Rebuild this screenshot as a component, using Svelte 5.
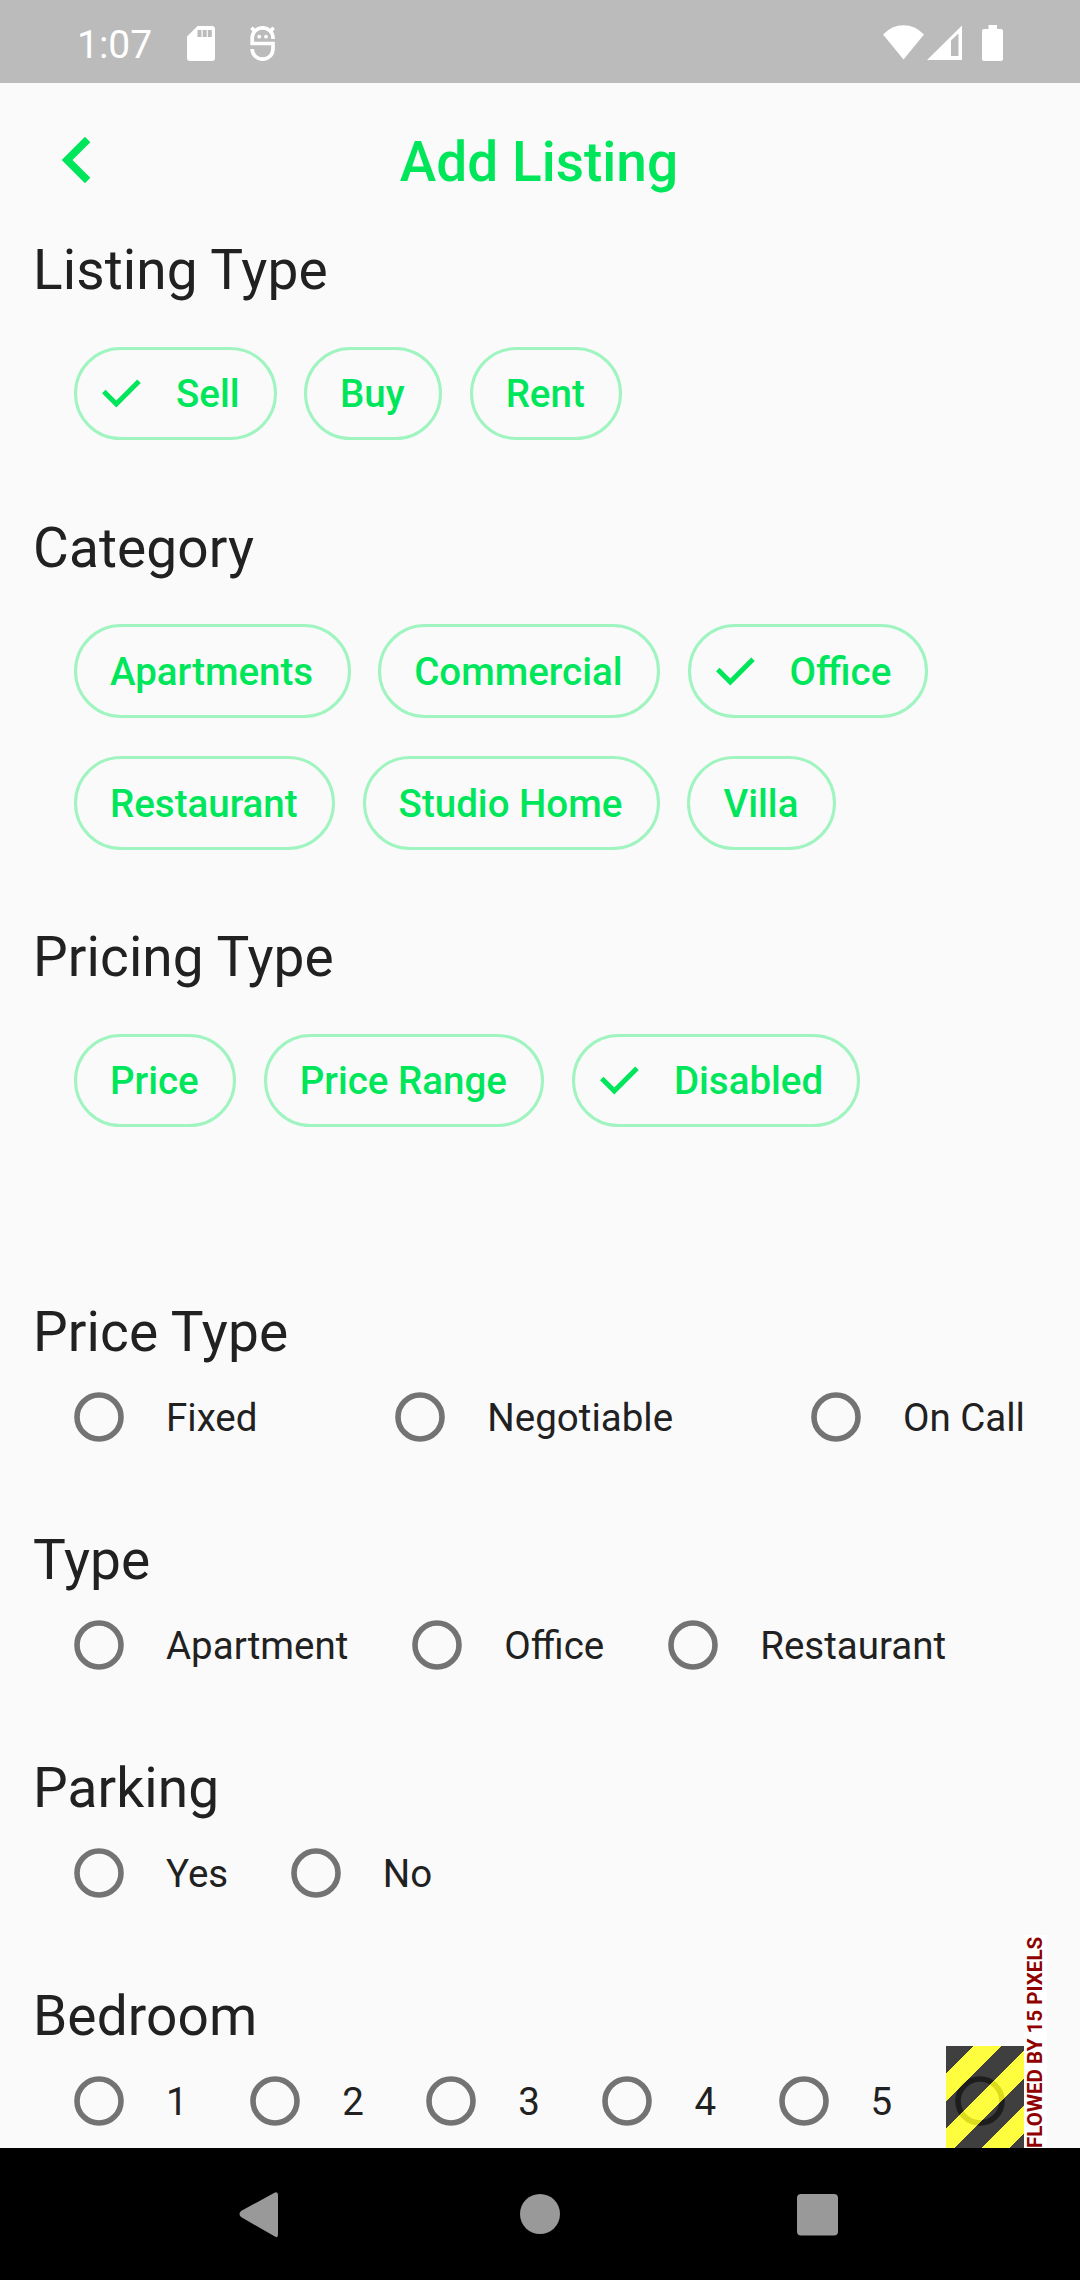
<script>
  const chipGroups = [
    { title: 'Listing Type', rows: [['Sell', 'Buy', 'Rent']], selected: 'Sell' },
    {
      title: 'Category',
      rows: [['Apartments', 'Commercial', 'Office'], ['Restaurant', 'Studio Home', 'Villa']],
      selected: 'Office'
    },
    { title: 'Pricing Type', rows: [['Price', 'Price Range', 'Disabled']], selected: 'Disabled' }
  ];
  const radioGroups = [
    { title: 'Price Type', options: ['Fixed', 'Negotiable', 'On Call'], spread: true },
    { title: 'Type', options: ['Apartment', 'Office', 'Restaurant'], roomy: true },
    { title: 'Parking', options: ['Yes', 'No'] },
    { title: 'Bedroom', options: ['1', '2', '3', '4', '5', ''], overflow: true }
  ];
</script>

<div class="screen">
  <header class="status">
    <span class="time">1:07</span>
    <svg class="sd" width="28" height="35" viewBox="0 0 28 35">
      <path fill="#fff" fill-rule="evenodd" d="M10.500 0H25a3 3 0 0 1 3 3v29a3 3 0 0 1-3 3H3a3 3 0 0 1-3-3V10.500zM10.500 4v7h4V4zM15.700 4v7h4V4zM20.800 4v7h4V4z" />
    </svg>
    <svg class="mask" width="26" height="35" viewBox="0 0 26 35">
      <g fill="none" stroke="#fff" stroke-width="3.700">
        <path d="M23 13V12A10.400 10.200 0 0 0 2.200 12V17.500H23V23A10.400 10.200 0 0 1 2.200 23" />
        <path d="M1.500 1.700l4 4M23.700 1.700l-4 4" />
      </g>
      <circle cx="9.200" cy="10.700" r="1.900" fill="#fff" />
      <circle cx="16" cy="10.700" r="1.900" fill="#fff" />
    </svg>
    <svg class="system" width="122" height="37" viewBox="0 0 122 37">
      <g fill="#fff">
        <path d="M0 9.500Q9 .3 20.500 .3T41 9.500L20.500 34.500z" />
        <path fill-rule="evenodd" d="M44 35L79 .5V35zM68 15.500V31H75.500V8.500z" />
        <path d="M105.500 0h8.500v4h4a2 2 0 0 1 2 2v28a2 2 0 0 1-2 2H101a2 2 0 0 1-2-2V6a2 2 0 0 1 2-2h4.500z" />
      </g>
    </svg>
  </header>

  <div class="appbar">
    <svg class="back" width="30" height="48" viewBox="0 0 30 48">
      <path fill="#00e65b" d="M24 .8L29.300 6.200 11.500 24 29.300 41.800 24 47.200 .7 24z" />
    </svg>
    <h1>Add Listing</h1>
  </div>

  <main>
    {#each chipGroups as group}
      <section class="chips-section">
        <h2>{group.title}</h2>
        {#each group.rows as row}
          <div class="chips">
            {#each row as label}
              <button class="chip" class:selected={label === group.selected}>
                {#if label === group.selected}
                  <svg width="39" height="29" viewBox="0 0 39 29">
                    <path fill="none" stroke="#00e65b" stroke-width="5" d="M1.800 12.600L14.300 25 37 2.300" />
                  </svg>
                {/if}
                <span>{label}</span>
              </button>
            {/each}
          </div>
        {/each}
      </section>
    {/each}

    <div class="radio-groups">
      {#each radioGroups as group}
        <section class="radio-section">
          <h2>{group.title}</h2>
          <div class="radios" class:spread={group.spread} class:roomy={group.roomy}>
            {#each group.options as option}
              <div class="option">
                <svg width="50" height="50" viewBox="0 0 50 50">
                  <circle cx="25" cy="25" r="22" fill="none" stroke="#737373" stroke-width="5.600" />
                </svg>
                <span>{option}</span>
              </div>
            {/each}
            {#if group.overflow}
              <div class="stripes"></div>
              <div class="warning">FLOWED BY 15 PIXELS</div>
            {/if}
          </div>
        </section>
      {/each}
    </div>
  </main>

  <nav>
    <svg width="1080" height="132" viewBox="0 0 1080 132">
      <g fill="#999">
        <path d="M241 63L274 45Q278 43 278 47V86Q278 91 274 88L241 69Q238 66 241 63z" />
        <circle cx="540" cy="66" r="20" />
        <rect x="797" y="46" width="41" height="41.500" rx="4" />
      </g>
    </svg>
  </nav>
</div>

<style>
  :global(body) {
    background: #fafafa;
  }
  .screen {
    width: 1080px;
    height: 2280px;
    overflow: hidden;
    display: flex;
    flex-direction: column;
    background: #fafafa;
    color: #212121;
    font-family: Roboto, sans-serif;
  }
  h1,
  h2 {
    margin: 0;
  }
  .status {
    flex: none;
    box-sizing: border-box;
    height: 83px;
    padding: 0 75px 0 77px;
    display: flex;
    align-items: center;
    background: #bbb;
    color: #fff;
  }
  .time {
    width: 110px;
    font-size: 39px;
    line-height: 48px;
    padding-top: 7px;
  }
  .sd,
  .mask {
    margin-top: 4px;
  }
  .mask {
    margin-left: 35px;
  }
  .system {
    margin-left: auto;
    margin-top: 4px;
  }
  .appbar {
    flex: none;
    height: 155px;
    display: grid;
    grid-template-columns: 200px 1fr 200px;
    align-items: center;
  }
  .back {
    margin-left: 61px;
    margin-bottom: 1px;
  }
  h1 {
    padding-top: 3px;
    padding-right: 2px;
    font-size: 55px;
    font-weight: 500;
    line-height: 64px;
    text-align: center;
    color: #00e65b;
  }
  main {
    flex: 1;
    min-height: 0;
    overflow: hidden;
  }
  h2 {
    padding-left: 33px;
    font-size: 55px;
    font-weight: 400;
    line-height: 64px;
    letter-spacing: 0.1px;
  }
  .chips-section {
    padding-bottom: 56px;
  }
  .chips-section h2 {
    padding-bottom: 25.500px;
  }
  .chips {
    height: 132px;
    padding-left: 74px;
    display: flex;
    align-items: center;
    gap: 27.500px;
  }
  .chip {
    box-sizing: border-box;
    height: 93.500px;
    padding: 1px 34.500px 0 33px;
    display: flex;
    align-items: center;
    border: 3px solid #a0f4c0;
    border-radius: 47px;
    background: none;
    color: #00e65b;
    font: 500 38.500px/46px Roboto, sans-serif;
  }
  .chip.selected {
    padding-left: 25px;
    padding-right: 34px;
  }
  .chip svg {
    margin-top: -1px;
    margin-right: 35px;
  }
  .radio-groups {
    padding-top: 97.500px;
  }
  .radio-section {
    height: 228px;
  }
  .radios {
    position: relative;
    height: 110px;
    margin: -2px 56px 0 33px;
    display: flex;
    align-items: center;
    gap: 21.500px;
  }
  .roomy {
    gap: 23px;
  }
  .spread {
    justify-content: space-between;
    margin-right: 55px;
  }
  .option {
    flex: none;
    display: flex;
    align-items: center;
    font-size: 38.500px;
    line-height: 46px;
  }
  .option span {
    padding-top: 2px;
  }
  .option svg {
    flex: none;
    margin: 0 42px 0 41px;
  }
  .stripes {
    position: absolute;
    right: 0;
    top: 0;
    width: 78.500px;
    height: 110px;
    background: repeating-linear-gradient(135deg, rgba(0, 0, 0, 0.75) 0 19.450px, rgba(255, 255, 0, 0.75) 19.450px 38.900px);
  }
  .warning {
    position: absolute;
    left: 991px;
    top: -111px;
    box-sizing: border-box;
    width: 23px;
    height: 213px;
    background: #fff;
    color: #900000;
    font-size: 20.600px;
    font-weight: 700;
    line-height: 23px;
    white-space: nowrap;
    writing-mode: vertical-rl;
    transform: rotate(180deg);
  }
  nav {
    flex: none;
    height: 132px;
    background: #000;
  }
  nav svg {
    display: block;
  }
</style>
